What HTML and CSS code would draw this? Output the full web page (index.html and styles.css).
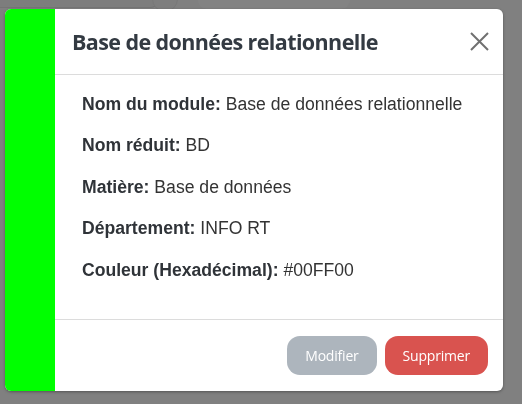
FILE: index.html
```html
<!DOCTYPE html>
<html lang="fr">
<head>
<meta charset="utf-8">
<title>Module</title>
<link rel="stylesheet" href="styles.css">
</head>
<body>
<div class="page">
  <div class="bg-card"></div>
  <div class="bg-round"></div>
  <div class="bg-pill"></div>
</div>
<div class="backdrop"></div>
<div class="modal">
  <div class="modal-content">
    <div class="color-strip"></div>
    <div class="modal-main">
      <div class="modal-header">
        <h4 class="modal-title">Base de données relationnelle</h4>
        <button class="close" aria-label="Fermer">
          <svg width="19" height="19" viewBox="0 0 19 19"><path d="M1 1 L18 18 M18 1 L1 18" stroke="#707070" stroke-width="2" fill="none"/></svg>
        </button>
      </div>
      <div class="modal-body">
        <p><strong>Nom du module:</strong> Base de données relationnelle</p>
        <p><strong>Nom réduit:</strong> BD</p>
        <p><strong>Matière:</strong> Base de données</p>
        <p><strong>Département:</strong> INFO RT</p>
        <p><strong>Couleur (Hexadécimal):</strong> #00FF00</p>
      </div>
      <div class="modal-footer">
        <button class="btn btn-secondary">Modifier</button>
        <button class="btn btn-danger">Supprimer</button>
      </div>
    </div>
  </div>
</div>
</body>
</html>
```

FILE: styles.css
```css
html, body {
  margin: 0;
  padding: 0;
}
body {
  background: #808080;
  font-family: "Liberation Sans", Arial, sans-serif;
  overflow: hidden;
  height: 404px;
}
.page {
  display: flex;
  align-items: flex-start;
}
.bg-card {
  width: 156px;
  height: 7px;
  border-right: 1px solid #757575;
  border-bottom: 1px solid #757575;
  border-bottom-right-radius: 6px;
  background: #7d7d7d;
}
.bg-round {
  width: 24px;
  height: 24px;
  margin-left: -5px;
  margin-top: -14px;
  border-radius: 50%;
  border: 1px solid #787878;
  background: #7e7e7e;
}
.bg-pill {
  width: 152px;
  height: 9px;
  margin-left: 20px;
  background: #838383;
  border-bottom-left-radius: 16px;
  border-bottom-right-radius: 16px;
}
.backdrop {
  position: fixed;
  inset: 0;
  background: rgba(0, 0, 0, 0);
}
.modal {
  position: fixed;
  top: 9px;
  left: 5px;
}
.modal-content {
  width: 498px;
  display: flex;
  background: #fff;
  border-radius: 6px;
  overflow: hidden;
  box-shadow: 0 1px 3px rgba(0, 0, 0, 0.35);
}
.color-strip {
  width: 50px;
  flex: none;
  background: #00ff00;
}
.modal-main {
  flex: 1;
  display: flex;
  flex-direction: column;
}
.modal-header {
  height: 65px;
  border-bottom: 1px solid #dcdcdc;
  display: flex;
  align-items: center;
  justify-content: space-between;
  padding: 0 14px 0 17px;
}
.modal-title {
  margin: 0;
  font-family: "Open Sans", "Noto Sans", sans-serif;
  font-weight: 700;
  font-size: 21.5px;
  color: #333a42;
  letter-spacing: -0.6px;
}
.close {
  border: 0;
  background: none;
  padding: 0;
  margin-top: -1px;
  width: 19px;
  height: 19px;
  display: flex;
}
.modal-body {
  padding: 16.5px 16px 19.5px 27px;
  color: #333;
  font-size: 17.6px;
}
.modal-body p {
  margin: 0 0 16px;
  line-height: 25.6px;
}
.modal-body strong {
  color: #2f3338;
}
.modal-footer {
  border-top: 1px solid #dcdcdc;
  padding: 16px 15px 16px;
  display: flex;
  justify-content: flex-end;
  gap: 8px;
}
.btn {
  height: 39px;
  border: 0;
  border-radius: 13px;
  padding: 0 18px;
  color: #fff;
  font-family: "Open Sans", "Noto Sans", sans-serif;
  font-size: 14px;
  letter-spacing: -0.2px;
}
.btn-secondary {
  background: #adb5bd;
}
.btn-danger {
  background: #d9534f;
}
```
